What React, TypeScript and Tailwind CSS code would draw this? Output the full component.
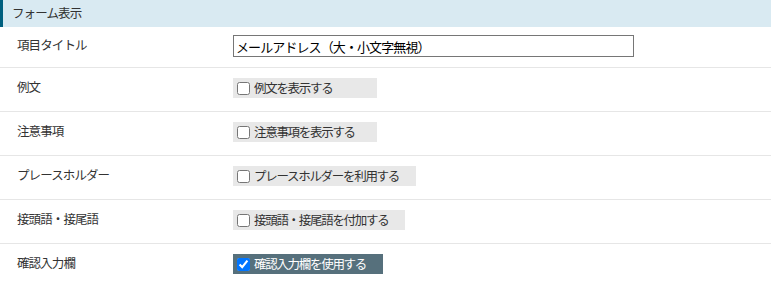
import { useState } from 'react'

type Row = { label: string; option: string; checked: boolean }

const initialRows: Row[] = [
  { label: '例文', option: '例文を表示する', checked: false },
  { label: '注意事項', option: '注意事項を表示する', checked: false },
  { label: 'プレースホルダー', option: 'プレースホルダーを利用する', checked: false },
  { label: '接頭語・接尾語', option: '接頭語・接尾語を付加する', checked: false },
  { label: '確認入力欄', option: '確認入力欄を使用する', checked: true },
]

export default function App() {
  const [title, setTitle] = useState('メールアドレス（大・小文字無視）')
  const [rows, setRows] = useState(initialRows)

  const toggle = (i: number) => {
    setRows((prev) => prev.map((r, j) => (j === i ? { ...r, checked: !r.checked } : r)))
  }

  return (
    <div
      className="w-[771px] h-[286px] bg-white text-[12.5px] tracking-[-0.9px] text-[#333] overflow-hidden"
      style={{ fontFamily: '"Noto Sans CJK JP", "Noto Sans", sans-serif' }}
    >
      {/* Section header */}
      <div className="h-[27px] flex items-center pl-[9px] bg-[#d9eaf2] border-l-[3px] border-[#00607f]">
        フォーム表示
      </div>

      {/* Title row */}
      <div className="flex pt-[8px] pb-[10px] border-b border-[#e6e6e6]">
        <div className="w-[233px] pl-[17px] leading-[20px]">項目タイトル</div>
        <input
          type="text"
          value={title}
          onChange={(e) => setTitle(e.target.value)}
          className="w-[401px] h-[22px] px-[2px] border border-[#767676] text-[13px] tracking-[-0.9px] text-black outline-none"
        />
      </div>

      {rows.map((row, i) => (
        <div
          key={row.label}
          className={`flex pt-[10px] pb-[13px] ${i < rows.length - 1 ? 'border-b border-[#e6e6e6]' : ''}`}
        >
          <div className="w-[233px] pl-[17px] leading-[18px]">{row.label}</div>
          <label
            className={
              row.checked
                ? 'flex items-center h-[20px] min-w-[144px] pl-[4px] pr-[17px] gap-[4px] bg-[#56707c] text-white cursor-pointer'
                : 'flex items-center h-[20px] min-w-[144px] pl-[4px] pr-[17px] gap-[4px] bg-[#e8e8e8] text-[#333] cursor-pointer'
            }
          >
            <input
              type="checkbox"
              checked={row.checked}
              onChange={() => toggle(i)}
              className="w-[13px] h-[13px] m-0"
            />
            <span className="leading-[20px] tracking-[-1.3px]">{row.option}</span>
          </label>
        </div>
      ))}
    </div>
  )
}
